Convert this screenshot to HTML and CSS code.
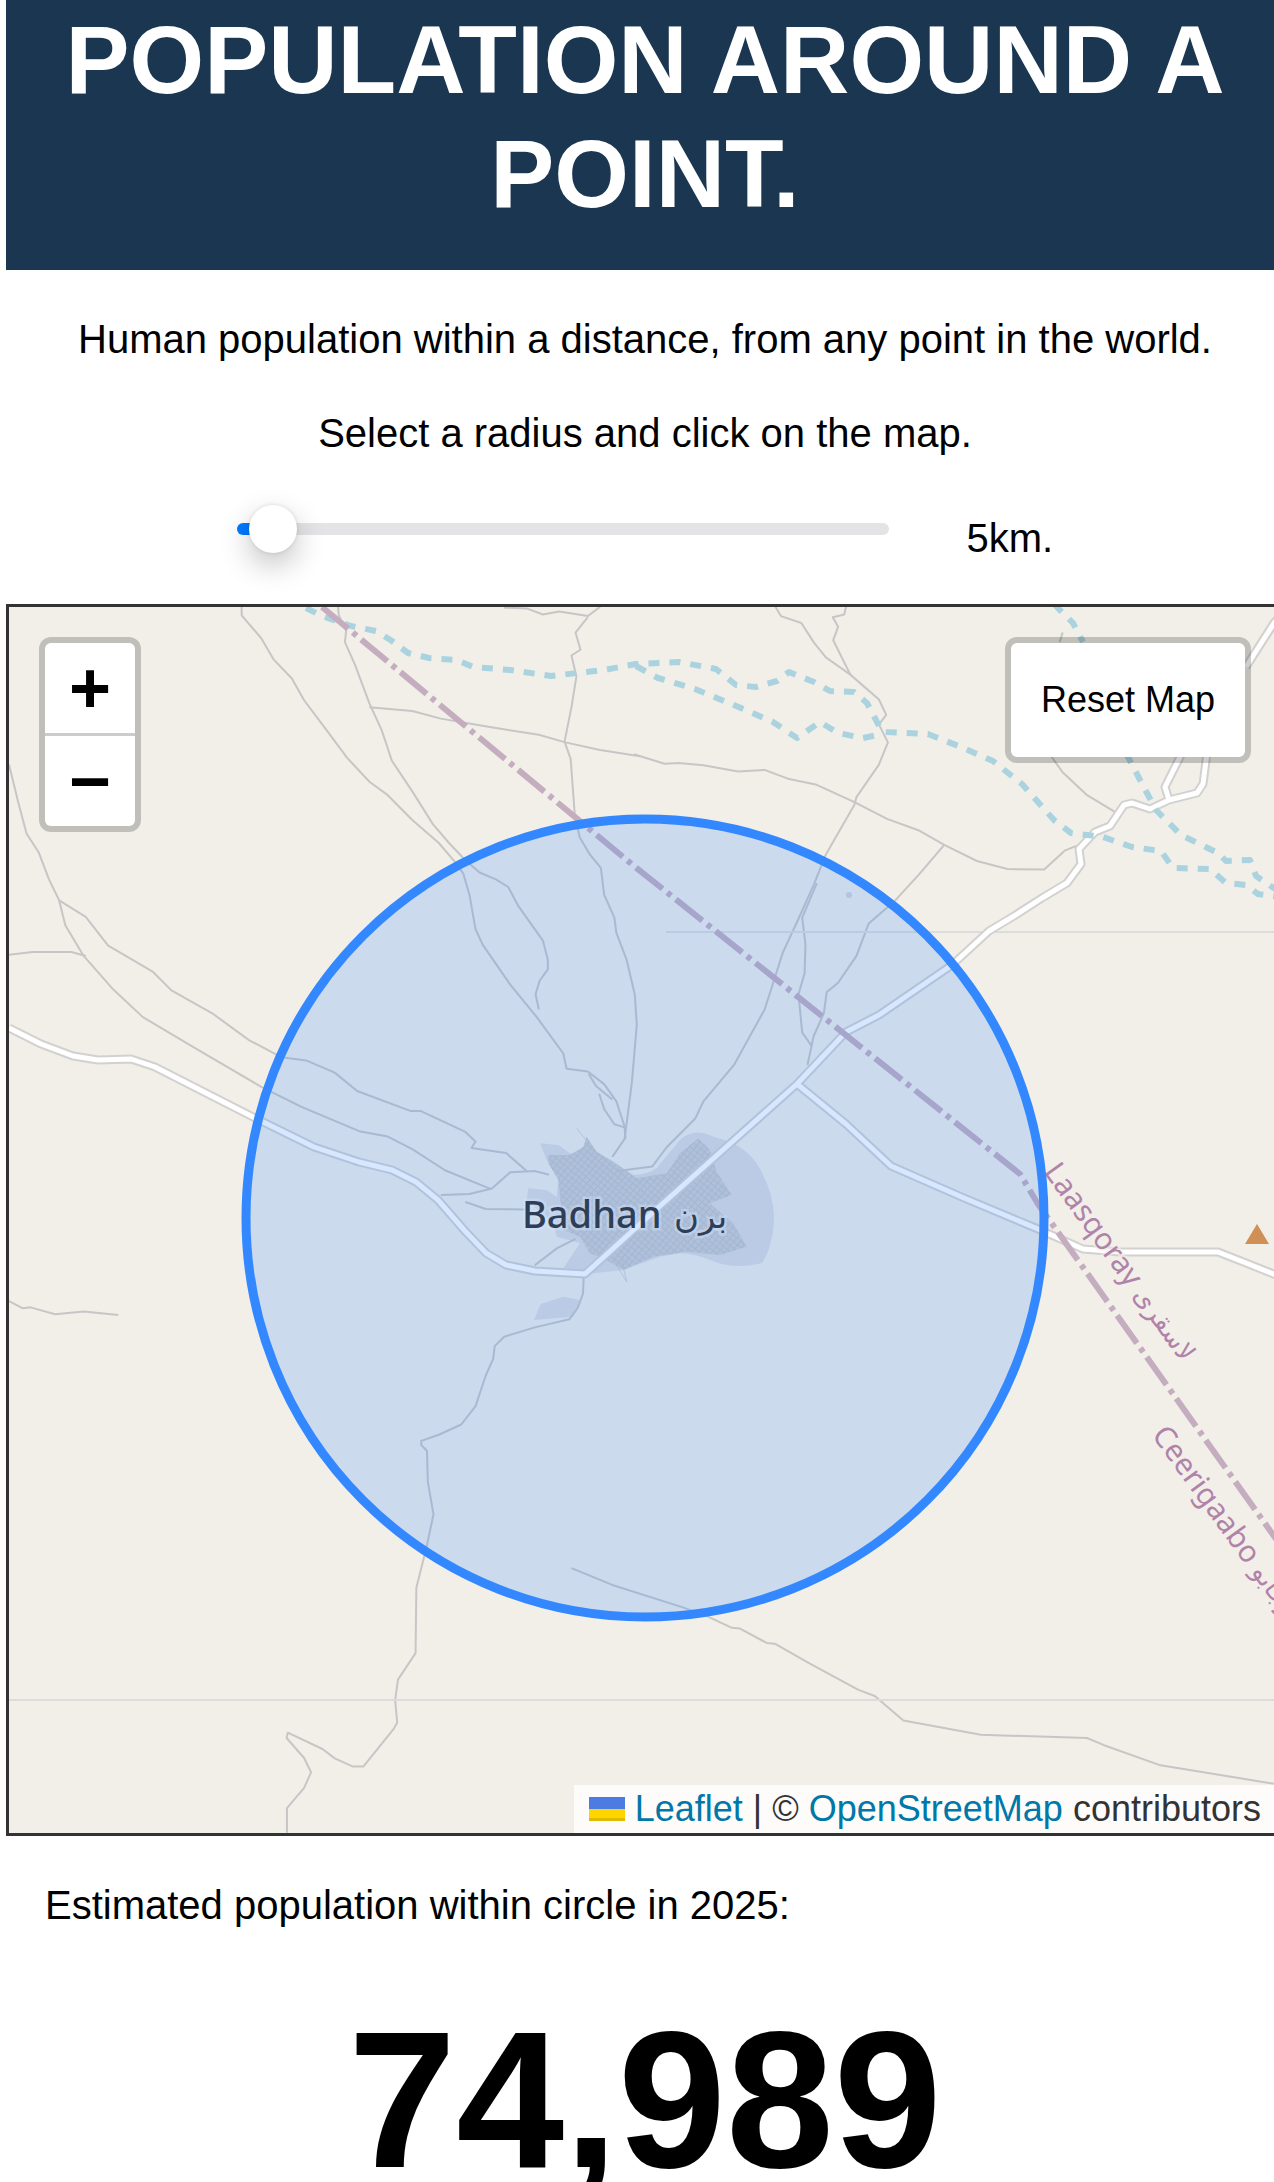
FILE: index.html
```html
<!DOCTYPE html>
<html lang="en">
<head>
<meta charset="utf-8">
<meta name="viewport" content="width=device-width, initial-scale=1">
<title>Population around a point</title>
<link rel="stylesheet" href="styles.css">
</head>
<body>
<main class="page">
  <header class="banner">
    <h1 class="title">POPULATION AROUND A POINT.</h1>
  </header>
  <section class="intro">
    <p class="lead">Human population within a distance, from any point in the world.</p>
    <p class="lead">Select a radius and click on the map.</p>
  </section>
  <div class="radius">
    <input class="slider" id="radius" type="range" min="0" max="250" value="5" aria-label="Radius in kilometres">
    <label class="radius-label" for="radius">5km.</label>
  </div>
  <div class="map">
    <svg class="tiles" viewBox="9 607 1272 1226" preserveAspectRatio="xMidYMid slice" role="img" aria-label="Map of Badhan">
      <defs>
        <pattern id="streets" width="15" height="15" patternUnits="userSpaceOnUse" patternTransform="rotate(40)">
          <rect width="15" height="15" fill="#cfcfd1"/>
          <path d="M0 1H15M1 0V15" stroke="#c2c2c7" stroke-width="4"/>
        </pattern>
      </defs>
      <rect x="9" y="607" width="1272" height="1226" fill="#f2efe9"/>

      <!-- built-up area -->
      <g transform="translate(480 1100) scale(.3333)">
        <path fill="#dedddf" d="M180 130L235 135L270 160L350 155L400 185L460 225Q500 225 530 205L600 120Q640 80 700 110Q790 130 830 190Q880 270 882 350Q880 440 845 490Q760 510 690 480Q640 460 600 460L540 470L430 510L340 520L250 505L300 430L230 410L220 370L140 300L145 265L200 270L230 290L235 230L200 180z"/>
        <path fill="url(#streets)" d="M205 165L270 165L310 140L320 110L350 155L400 185L470 235L560 220L600 160L655 115L690 150L710 215L755 285L690 310L760 370L800 440L720 465L620 455L520 470L430 510L380 480L330 460L300 410L250 390L235 240L205 190z"/>
        <path fill="#dedddf" d="M162 660L182 612L250 590L300 600L280 650z"/>
        <path class="track" d="M290 85L350 160M400 480L440 545L425 480"/>
      </g>

      <g class="track" transform="translate(0 600) scale(.4082 .3827)">
        <path d="M592 15L592 40L640 100L670 155L715 205L745 262L800 340L850 412L905 475L950 510L1010 575L1075 635L1115 685L1135 715L1150 770L1165 860L1182 900L1250 1005L1315 1090L1380 1185L1388 1225L1440 1232L1480 1265L1510 1310L1530 1375L1532 1405L1500 1455"/>
        <path d="M1442 1238L1460 1270L1500 1305M1468 1290L1480 1330L1505 1370L1530 1378"/>
        <path d="M828 15L830 40L848 80L845 110L870 170L905 270L935 340L960 420L1010 500L1060 585L1100 635L1140 680L1175 712L1215 730L1245 750L1270 800L1330 890L1342 940L1342 965L1322 995L1312 1030L1320 1070"/>
        <path d="M905 280L1010 290L1080 310L1200 332L1320 352L1385 372L1470 392L1568 408"/>
        <path d="M1235 20L1290 22L1330 38L1370 30L1440 42L1470 18M1440 45L1410 85L1422 130L1400 145L1412 200L1400 280L1383 370L1398 415L1408 560L1420 620L1445 665L1472 700L1480 770L1505 830L1510 870L1535 940L1555 1030L1560 1110L1548 1260L1530 1410"/>
        <path d="M22 430L45 530L65 610L95 660L120 730L145 785L210 828L265 903L375 972L420 1020L520 1080L610 1150L690 1195L750 1203L820 1235L875 1283L1005 1335L1030 1335L1140 1390L1165 1415L1155 1432L1240 1445L1290 1492"/>
        <path d="M145 785L160 850L205 930L275 1015L350 1090L480 1172L640 1272L740 1325L880 1388L950 1402L1010 1435L1090 1490L1200 1538"/>
        <path d="M22 927L80 920L175 920L210 930M1080 1555L1150 1552L1205 1538L1250 1495L1310 1492L1345 1502"/>
      </g>
      <g class="track" transform="translate(634 600) scale(.4082 .3827)">
        <path d="M0 403L75 428L110 426L170 432L255 448L320 444L380 468L445 482L540 528L620 572L700 603L760 640L840 682L915 703L1005 704L1055 655L1090 640"/>
        <path d="M345 15L360 42L410 60L440 110L470 150L530 195L600 260L618 300L600 325L622 372L600 430L545 515L540 535L470 665L440 745L400 840L365 920L320 1070L245 1215L170 1310L150 1355L80 1430L45 1480L-40 1492"/>
        <path d="M520 15L515 38L487 45L500 70L488 105L530 195"/>
        <path d="M448 740L412 830L420 900L418 975L403 1030L412 1130L435 1165L425 1215"/>
        <path d="M760 640L700 715L640 785L575 845L545 930L500 1000L472 1025L465 1080L440 1140L435 1165"/>
        <path d="M1020 405L1050 450L1110 510L1180 555M1050 85L1043 110"/>
      </g>
      <g class="track" transform="translate(0 1200) scale(.4082)">
        <path d="M22 248L55 265L75 263L135 280L205 273L290 282M1140 5L1190 22L1285 23M1310 160L1365 118L1410 95"/>
        <path d="M1430 190L1428 230L1415 265L1395 292L1310 312L1235 335L1212 358L1208 390L1190 430L1165 505L1130 550L1075 575L1032 590L1032 600L1046 615L1048 690L1062 770L1045 850L1020 950L1018 1110L975 1175L968 1225L973 1280L965 1295L890 1388L865 1388L820 1368L790 1345L705 1305L702 1318L745 1367L762 1402L745 1440L703 1490L703 1550"/>
        <path d="M1400 902L1500 943L1673 998L1733 1020L1793 1048L1813 1050L1878 1085L1898 1087L1983 1135L2103 1200L2143 1215L2213 1275L2403 1310L2663 1318L2703 1335L2843 1385L3121 1430"/>
      </g>
      <path class="grid" d="M666 932H1281M9 1700H1281"/>

      <!-- roads: casing first, then the white core -->
      <g class="casing">
        <path d="M9 1028L41 1044L73 1056L98 1060L131 1059L155 1067L204 1092L257 1119L314 1147L359 1162L392 1170L416 1182L438 1200L465 1231L486 1253L506 1265L535 1271L585 1274L660 1206L797 1084L846 1032L879 1015L952 965L989 931L1014 916L1042 898L1067 883L1081 864L1079 849L1095 832L1110 826L1124 805L1132 803L1150 809L1169 800L1197 793L1203 784L1207 753M1169 800L1165 787L1181 755M1246 667L1274 623L1284 612"/>
        <path d="M797 1084L846 1124L891 1166L964 1198L1038 1229L1083 1249L1120 1252L1218 1252L1246 1263L1281 1277"/>
      </g>
      <g class="core">
        <path d="M9 1028L41 1044L73 1056L98 1060L131 1059L155 1067L204 1092L257 1119L314 1147L359 1162L392 1170L416 1182L438 1200L465 1231L486 1253L506 1265L535 1271L585 1274L660 1206L797 1084L846 1032L879 1015L952 965L989 931L1014 916L1042 898L1067 883L1081 864L1079 849L1095 832L1110 826L1124 805L1132 803L1150 809L1169 800L1197 793L1203 784L1207 753M1169 800L1165 787L1181 755M1246 667L1274 623L1284 612"/>
        <path d="M797 1084L846 1124L891 1166L964 1198L1038 1229L1083 1249L1120 1252L1218 1252L1246 1263L1281 1277"/>
      </g>

      <!-- seasonal rivers -->
      <g class="river">
        <path d="M306 608L322 616L351 626L376 631L392 641L408 653L429 658L457 660L473 667L510 670L551 676L604 670L636 664L679 662L716 669L736 685L756 687L777 681L789 672L814 682L830 691L854 692L867 703L879 726L883 732L928 734L961 747L993 761L1022 784L1054 820L1071 833L1103 837L1132 847L1161 851L1173 868L1210 869L1226 883L1246 885L1258 894L1281 897"/>
        <path d="M636 666L658 678L695 689L724 701L748 711L773 722L797 738L820 722L838 733L863 738L883 734"/>
        <path d="M1054 604L1073 623L1083 642M1126 753L1140 780L1156 810L1181 835L1218 853L1226 861L1250 860L1256 876L1281 893"/>
      </g>

      <path class="boundary" d="M322 607L634 866L1020 1174L1038 1204L1281 1546"/>
      <path fill="#d08f55" d="M1257 1224L1269 1244H1245z"/>
      <circle cx="849" cy="895" r="3" fill="#d5d2dd"/>

      <g class="place">
        <text x="522" y="1228">Badhan</text>
        <text class="place-arabic" x="674" y="1228">برن</text>
      </g>
      <g class="region">
        <text transform="translate(1043 1172) rotate(54)">Laasqoray <tspan class="region-arabic">لاسقرى</tspan></text>
        <text transform="translate(1151 1435) rotate(54)">Ceerigaabo <tspan class="region-arabic">عيرجابو</tspan></text>
      </g>

      <circle class="range" cx="645" cy="1218" r="399"/>
    </svg>

    <div class="zoom">
      <button class="zoom-button" type="button" aria-label="Zoom in">+</button>
      <button class="zoom-button" type="button" aria-label="Zoom out">−</button>
    </div>
    <button class="reset" type="button">Reset Map</button>
    <div class="attribution">
      <svg class="flag" viewBox="0 0 12 8" aria-hidden="true"><path fill="#4c7be1" d="M0 0h12v4H0z"/><path fill="#ffd500" d="M0 4h12v3H0z"/><path fill="#e0bc00" d="M0 7h12v1H0z"/></svg>
      <span><a class="link" href="#leaflet">Leaflet</a> | © <a class="link" href="#osm">OpenStreetMap</a> contributors</span>
    </div>
  </div>
  <p class="caption">Estimated population within circle in 2025:</p>
  <p class="total">74,989</p>
</main>
</body>
</html>
```
FILE: styles.css
```css
* { box-sizing: border-box; }

html { scrollbar-width: none; }

body {
  height: 100vh;
  margin: 0;
  overflow-x: hidden;
  overflow-y: auto;
  scrollbar-width: none;
  background: #fff;
  color: #000;
  font-family: "Liberation Sans", Helvetica, Arial, sans-serif;
  font-size: 40px;
  line-height: 46px;
}

.page { margin: 0 -10px 0 6px; }

.banner {
  padding: 3px 40px 39px;
  background: #1a3651;
  color: #fff;
  text-align: center;
}

.title {
  margin: 0;
  font-size: 96px;
  line-height: 114px;
}

.intro {
  display: flex;
  flex-direction: column;
  gap: 48px;
  padding-top: 46px;
  text-align: center;
}

.lead { margin: 0; }

.radius {
  display: flex;
  align-items: flex-start;
  justify-content: center;
  gap: 78px;
  padding: 48px 0 43px;
}

.slider {
  width: 51%;
  height: 12px;
  margin: 19px 0 0;
  appearance: none;
  border-radius: 6px;
  background: linear-gradient(to right, #007aff 24px, #e4e4e6 24px);
}

.slider::-webkit-slider-thumb {
  width: 48px;
  height: 48px;
  appearance: none;
  border-radius: 50%;
  background: #fff;
  box-shadow: 0 12px 30px rgba(0, 0, 0, .24), 0 0 4px rgba(0, 0, 0, .12);
}

.radius-label { padding-top: 11px; }

.map {
  position: relative;
  aspect-ratio: 1278 / 1232;
  overflow: hidden;
  border: 3px solid #333;
}

.tiles {
  display: block;
  width: 100%;
  height: 100%;
}

.track, .casing, .core, .grid, .river, .boundary { fill: none; stroke-linejoin: round; }
.track { stroke: #c6c6c6; stroke-width: 2px; }
.track path { vector-effect: non-scaling-stroke; }
.grid { stroke: #dcdcdc; stroke-width: 2px; }
.casing { stroke: #d2d1d0; stroke-width: 9px; }
.core { stroke: #fff; stroke-width: 5px; }
.river { stroke: #aad3df; stroke-width: 6px; stroke-dasharray: 11 10; }
.boundary { stroke: #c5adc0; stroke-width: 6px; stroke-dasharray: 34 6 5 6; }

.place {
  fill: #2c2c2c;
  font: 500 38px "Noto Sans", "DejaVu Sans", sans-serif;
  paint-order: stroke;
  stroke: rgba(255, 255, 255, .4);
  stroke-width: 5px;
}

.place-arabic { font-size: 34px; }

.region {
  fill: #b083a9;
  font: 30px "Noto Sans", "DejaVu Sans", sans-serif;
  paint-order: stroke;
  stroke: rgba(242, 239, 233, .6);
  stroke-width: 4px;
}

.region-arabic { font-size: 26px; }

.range {
  fill: #3388ff;
  fill-opacity: .2;
  stroke: #3388ff;
  stroke-width: 9px;
}

.zoom {
  position: absolute;
  top: 30px;
  left: 30px;
  display: flex;
  flex-direction: column;
  overflow: hidden;
  border: 6px solid rgba(0, 0, 0, .2);
  border-radius: 12px;
  background: #ccc;
  background-clip: padding-box;
  gap: 3px;
}

.zoom-button {
  width: 90px;
  height: 90px;
  padding: 0;
  border: 0;
  background: #fff;
  color: #000;
  font: bold 72px/90px "Liberation Sans", Helvetica, Arial, sans-serif;
}

.reset {
  position: absolute;
  top: 30px;
  right: 30px;
  padding: 36px 30px;
  border: 6px solid rgba(0, 0, 0, .2);
  border-radius: 12px;
  background: #fff;
  background-clip: padding-box;
  color: #000;
  font: 36px/42px "Liberation Sans", Helvetica, Arial, sans-serif;
}

.attribution {
  position: absolute;
  right: 0;
  bottom: 0;
  display: flex;
  align-items: center;
  gap: 10px;
  padding: 0 20px 0 15px;
  background: rgba(255, 255, 255, .8);
  color: #333;
  font-size: 36px;
  line-height: 48px;
}

.flag { width: 36px; height: 24px; }

.link { color: #0078a8; text-decoration: none; }

.caption { margin: 46px 39px 0; }

.total {
  margin: 62px 0 0;
  font-size: 194px;
  font-weight: bold;
  line-height: 220px;
  text-align: center;
}
```
